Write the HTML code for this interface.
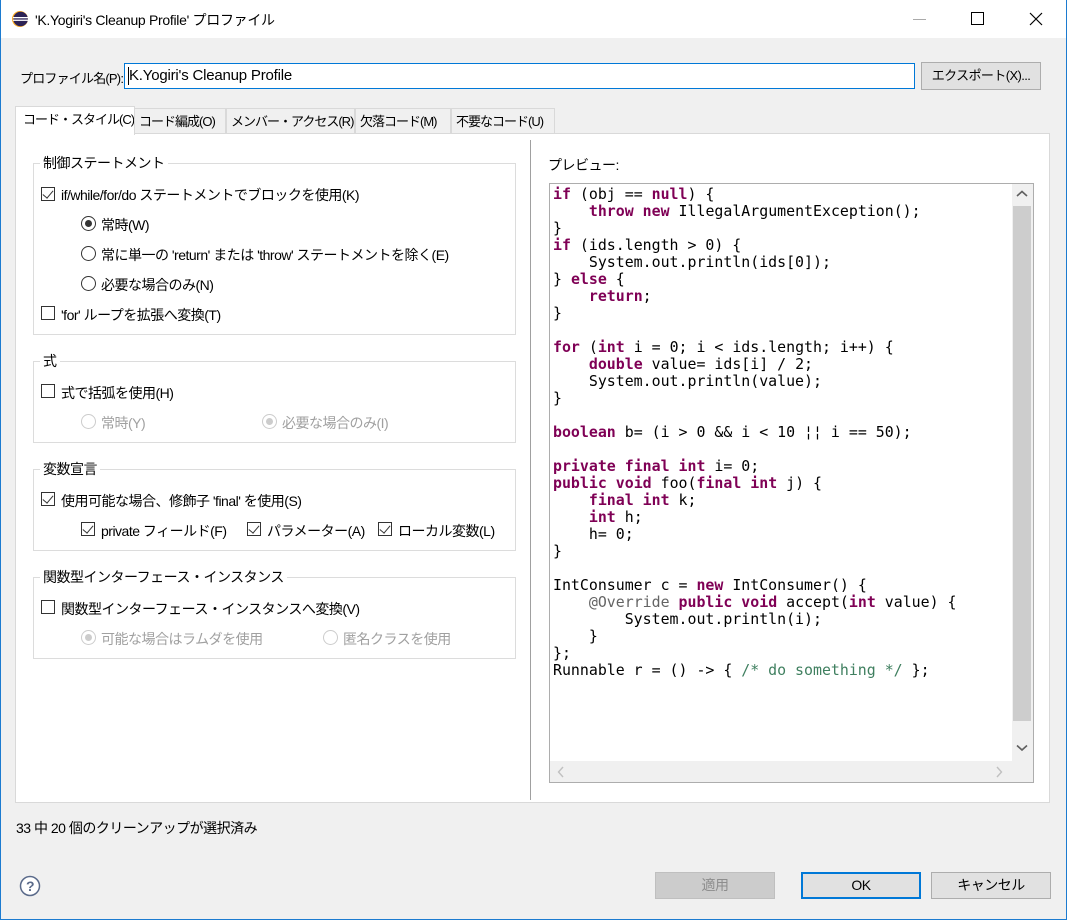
<!DOCTYPE html>
<html><head><meta charset="utf-8"><style>
*{margin:0;padding:0;box-sizing:border-box}
body{width:1067px;height:920px;overflow:hidden;background:#f0f0f0;font-family:"Liberation Sans","Noto Sans CJK JP",sans-serif;font-size:14px;letter-spacing:-0.5px;color:#000;position:relative}
.a{position:absolute;white-space:nowrap}
.frame{position:absolute;left:0;top:0;width:1067px;height:920px;border:1px solid #1c7bd0;border-top:none;pointer-events:none}
.title{position:absolute;left:0;top:0;width:1067px;height:38px;background:#fff}
.tab{position:absolute;top:108px;height:26px;border:1px solid #d9d9d9;border-bottom:none;background:#f0f0f0;padding:0 0 0 4px;line-height:26px;white-space:nowrap;overflow:hidden;font-size:13px;letter-spacing:-1px}
.grp{position:absolute;left:33px;width:483px;border:1px solid #dcdcdc}
.gt{position:absolute;left:6px;top:-11px;background:#fff;padding:0 3px;line-height:20px;white-space:nowrap}
.cb{position:absolute;width:14px;height:14px;border:1px solid #333;background:#fff}
.cb.c::after{content:"";position:absolute;left:3px;top:0px;width:5px;height:9px;border:solid #333;border-width:0 1.5px 1.5px 0;transform:rotate(40deg)}
.rb{position:absolute;width:15px;height:15px;border:1px solid #333;border-radius:50%;background:#fff}
.rb.s::after{content:"";position:absolute;left:3px;top:3px;width:7px;height:7px;border-radius:50%;background:#333}
.rb.d{border-color:#ccc}
.rb.d.s::after{background:#ccc}
.dis{color:#a0a0a0}
pre{font-family:"DejaVu Sans Mono","Liberation Mono",monospace;font-size:14.9px;line-height:17px;color:#000;letter-spacing:0}
.k{color:#7f0055;font-weight:bold}
.n{color:#646464}
.cm{color:#3f7f5f}
.btn{position:absolute;height:27px;border:1px solid #adadad;background:#e1e1e1;text-align:center;line-height:25px;white-space:nowrap}
</style></head><body>
<div class="title"></div>
<svg class="a" style="left:11px;top:10px" width="18" height="18" viewBox="0 0 18 18"><circle cx="9" cy="9" r="8" fill="#f5a623"/><circle cx="9.6" cy="9" r="7.3" fill="#2c2255"/><rect x="2" y="7" width="15" height="1.3" fill="#fff"/><rect x="2" y="9.6" width="15" height="1.3" fill="#fff"/></svg>
<div class="a" style="left:35px;top:10px;font-size:14px;letter-spacing:-0.3px">'K.Yogiri's Cleanup Profile' プロファイル</div>
<div class="a" style="left:913px;top:19px;width:13px;height:1px;background:#aaa"></div>
<div class="a" style="left:971px;top:12px;width:13px;height:13px;border:1px solid #000"></div>
<svg class="a" style="left:1029px;top:12px" width="14" height="14"><path d="M1 1L13 13M13 1L1 13" stroke="#000" stroke-width="1.2"/></svg>

<div class="a" style="left:20px;top:68px;font-size:13px;letter-spacing:-0.8px">プロファイル名(P):</div>
<div class="a" style="left:124px;top:63px;width:791px;height:26px;border:1px solid #0078d7;background:#fff;padding-left:4px;line-height:24px;font-size:15px;letter-spacing:-0.2px">K.Yogiri's Cleanup Profile</div>
<div class="a" style="left:128px;top:67px;width:1px;height:18px;background:#000"></div>
<div class="btn" style="left:921px;top:62px;width:120px;height:28px;line-height:26px;font-size:13px;letter-spacing:-0.6px">エクスポート(X)...</div>

<div class="tab" style="left:134px;width:92px">コード編成(O)</div>
<div class="tab" style="left:226px;width:129px">メンバー・アクセス(R)</div>
<div class="tab" style="left:355px;width:96px">欠落コード(M)</div>
<div class="tab" style="left:451px;width:104px">不要なコード(U)</div>
<div class="a" style="left:15px;top:133px;width:1035px;height:670px;background:#fff;border:1px solid #d9d9d9"></div>
<div class="tab" style="left:15px;top:106px;width:120px;height:29px;background:#fff;line-height:26px;padding-left:7px">コード・スタイル(C)</div>
<div class="a" style="left:530px;top:140px;width:1px;height:660px;background:#a0a0a0"></div>

<div class="grp" style="top:163px;height:172px"><div class="gt">制御ステートメント</div></div>
<div class="cb c" style="left:41px;top:187px"></div><div class="a" style="left:61px;top:185px">if/while/for/do ステートメントでブロックを使用(K)</div>
<div class="rb s" style="left:81px;top:216px"></div><div class="a" style="left:101px;top:215px">常時(W)</div>
<div class="rb" style="left:81px;top:246px"></div><div class="a" style="left:101px;top:245px">常に単一の 'return' または 'throw' ステートメントを除く(E)</div>
<div class="rb" style="left:81px;top:276px"></div><div class="a" style="left:101px;top:275px">必要な場合のみ(N)</div>
<div class="cb" style="left:41px;top:306px"></div><div class="a" style="left:61px;top:305px">'for' ループを拡張へ変換(T)</div>

<div class="grp" style="top:361px;height:82px"><div class="gt">式</div></div>
<div class="cb" style="left:41px;top:384px"></div><div class="a" style="left:61px;top:383px">式で括弧を使用(H)</div>
<div class="rb d" style="left:81px;top:414px"></div><div class="a dis" style="left:101px;top:413px">常時(Y)</div>
<div class="rb d s" style="left:262px;top:414px"></div><div class="a dis" style="left:282px;top:413px">必要な場合のみ(I)</div>

<div class="grp" style="top:469px;height:82px"><div class="gt">変数宣言</div></div>
<div class="cb c" style="left:41px;top:492px"></div><div class="a" style="left:61px;top:491px">使用可能な場合、修飾子 'final' を使用(S)</div>
<div class="cb c" style="left:81px;top:522px"></div><div class="a" style="left:101px;top:521px">private フィールド(F)</div>
<div class="cb c" style="left:247px;top:522px"></div><div class="a" style="left:267px;top:521px">パラメーター(A)</div>
<div class="cb c" style="left:378px;top:522px"></div><div class="a" style="left:398px;top:521px">ローカル変数(L)</div>

<div class="grp" style="top:577px;height:82px"><div class="gt">関数型インターフェース・インスタンス</div></div>
<div class="cb" style="left:41px;top:600px"></div><div class="a" style="left:61px;top:599px">関数型インターフェース・インスタンスへ変換(V)</div>
<div class="rb d s" style="left:81px;top:630px"></div><div class="a dis" style="left:101px;top:629px">可能な場合はラムダを使用</div>
<div class="rb d" style="left:323px;top:630px"></div><div class="a dis" style="left:343px;top:629px">匿名クラスを使用</div>

<div class="a" style="left:548px;top:155px">プレビュー:</div>
<div class="a" style="left:549px;top:183px;width:485px;height:600px;border:1px solid #adadad;background:#fff;overflow:hidden">
<pre style="position:absolute;left:3px;top:2px"><span class="k">if</span> (obj == <span class="k">null</span>) {
    <span class="k">throw</span> <span class="k">new</span> IllegalArgumentException();
}
<span class="k">if</span> (ids.length &gt; 0) {
    System.out.println(ids[0]);
} <span class="k">else</span> {
    <span class="k">return</span>;
}

<span class="k">for</span> (<span class="k">int</span> i = 0; i &lt; ids.length; i++) {
    <span class="k">double</span> value= ids[i] / 2;
    System.out.println(value);
}

<span class="k">boolean</span> b= (i &gt; 0 &amp;&amp; i &lt; 10 ¦¦ i == 50);

<span class="k">private</span> <span class="k">final</span> <span class="k">int</span> i= 0;
<span class="k">public</span> <span class="k">void</span> foo(<span class="k">final</span> <span class="k">int</span> j) {
    <span class="k">final</span> <span class="k">int</span> k;
    <span class="k">int</span> h;
    h= 0;
}

IntConsumer c = <span class="k">new</span> IntConsumer() {
    <span class="n">@Override</span> <span class="k">public</span> <span class="k">void</span> accept(<span class="k">int</span> value) {
        System.out.println(i);
    }
};
Runnable r = () -&gt; { <span class="cm">/* do something */</span> };</pre>
<div class="a" style="left:462px;top:0;width:21px;height:578px;background:#f0f0f0"></div>
<div class="a" style="left:463px;top:22px;width:18px;height:515px;background:#cdcdcd"></div>
<svg class="a" style="left:466px;top:6px" width="12" height="8"><path d="M1 6L6 1.5L11 6" stroke="#606060" stroke-width="1.6" fill="none"/></svg>
<svg class="a" style="left:466px;top:560px" width="12" height="8"><path d="M1 1.5L6 6L11 1.5" stroke="#606060" stroke-width="1.6" fill="none"/></svg>
<div class="a" style="left:0;top:577px;width:483px;height:21px;background:#f0f0f0"></div>
<svg class="a" style="left:7px;top:582px" width="8" height="12"><path d="M6 1L1.5 6L6 11" stroke="#c0c0c0" stroke-width="1.4" fill="none"/></svg>
<svg class="a" style="left:445px;top:582px" width="8" height="12"><path d="M2 1L6.5 6L2 11" stroke="#c0c0c0" stroke-width="1.4" fill="none"/></svg>
</div>

<div class="a" style="left:16px;top:818px">33 中 20 個のクリーンアップが選択済み</div>
<svg class="a" style="left:19px;top:875px" width="22" height="22"><circle cx="11" cy="11" r="9.5" fill="#fff" stroke="#5a6a8a" stroke-width="1.5"/><text x="11" y="16" font-size="14" font-weight="bold" text-anchor="middle" fill="#5a6a8a" font-family="Liberation Sans">?</text></svg>
<div class="btn" style="left:655px;top:872px;width:120px;background:#cccccc;border-color:#bfbfbf;color:#8d8d8d">適用</div>
<div class="btn" style="left:801px;top:872px;width:120px;border:2px solid #0078d7;line-height:23px">OK</div>
<div class="btn" style="left:931px;top:872px;width:120px">キャンセル</div>
<div class="frame"></div>
</body></html>
